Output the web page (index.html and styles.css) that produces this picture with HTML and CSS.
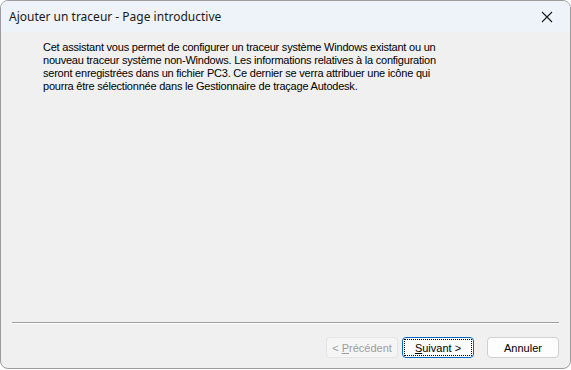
FILE: index.html
```html
<!DOCTYPE html>
<html lang="fr">
<head>
    <meta charset="UTF-8">
    <title>Ajouter un traceur - Page introductive</title>
    <link rel="stylesheet" href="styles.css">
</head>
<body>
    <div class="dialog">
        <div class="titlebar">
            <span class="title">Ajouter un traceur - Page introductive</span>
            <button class="close-btn" aria-label="Fermer">
                <svg width="12" height="12" viewBox="0 0 12 12">
                    <path d="M1 1 L11 11 M11 1 L1 11" stroke="#1a1a1a" stroke-width="1.1" fill="none"/>
                </svg>
            </button>
        </div>
        <div class="content">
            <p class="intro">
                Cet assistant vous permet de configurer un traceur système Windows existant ou un
                nouveau traceur système non-Windows. Les informations relatives à la configuration
                seront enregistrées dans un fichier PC3. Ce dernier se verra attribuer une icône qui
                pourra être sélectionnée dans le Gestionnaire de traçage Autodesk.
            </p>
        </div>
        <div class="footer">
            <div class="separator"></div>
            <div class="buttons">
                <button class="btn" disabled>&lt; <u>P</u>récédent</button>
                <button class="btn btn-default"><span class="focus"><u>S</u>uivant &gt;</span></button>
                <button class="btn btn-cancel">Annuler</button>
            </div>
        </div>
    </div>
</body>
</html>
```

FILE: styles.css
```css
body {
    margin: 0;
    padding: 0;
    background-color: white;
    font-family: 'Liberation Sans', Arial, sans-serif;
}
.dialog {
    width: 569px;
    height: 367px;
    border: 1px solid #9c9c9c;
    border-radius: 8px;
    background-color: #f0f0f0;
    overflow: hidden;
    display: flex;
    flex-direction: column;
}
.titlebar {
    height: 31px;
    background-color: #eef3f9;
    display: flex;
    align-items: center;
    justify-content: space-between;
    padding-left: 8px;
}
.title {
    font-family: 'Noto Sans', 'Liberation Sans', sans-serif;
    font-size: 12px;
    color: #1a1a1a;
}
.close-btn {
    background: none;
    border: none;
    padding: 0;
    width: 46px;
    height: 31px;
    display: flex;
    align-items: center;
    justify-content: center;
}
.content {
    flex-grow: 1;
    padding: 9px 0 0 42px;
}
.intro {
    margin: 0;
    width: 400px;
    font-size: 11px;
    line-height: 13px;
    color: #000;
    letter-spacing: -0.22px;
}
.footer {
    padding: 0 11px 10px 11px;
}
.separator {
    height: 1px;
    background-color: #a0a0a0;
    border-bottom: 1px solid #ffffff;
    margin-bottom: 13px;
}
.buttons {
    display: flex;
    justify-content: flex-end;
    gap: 4px;
}
.btn {
    width: 72px;
    height: 21px;
    padding: 0;
    font-family: 'Liberation Sans', Arial, sans-serif;
    font-size: 11px;
    color: #000;
    background-color: #fdfdfd;
    border: 1px solid #d0d0d0;
    border-radius: 4px;
}
.btn:disabled {
    color: #9d9d9d;
    background-color: #f5f5f5;
    border-color: #e5e5e5;
}
.btn-default {
    border-color: #0067c0;
    padding: 1px;
}
.focus {
    display: flex;
    align-items: center;
    justify-content: center;
    height: 100%;
    border: 1px dotted #000;
    box-sizing: border-box;
}
.btn-cancel {
    margin-left: 9px;
}
```
